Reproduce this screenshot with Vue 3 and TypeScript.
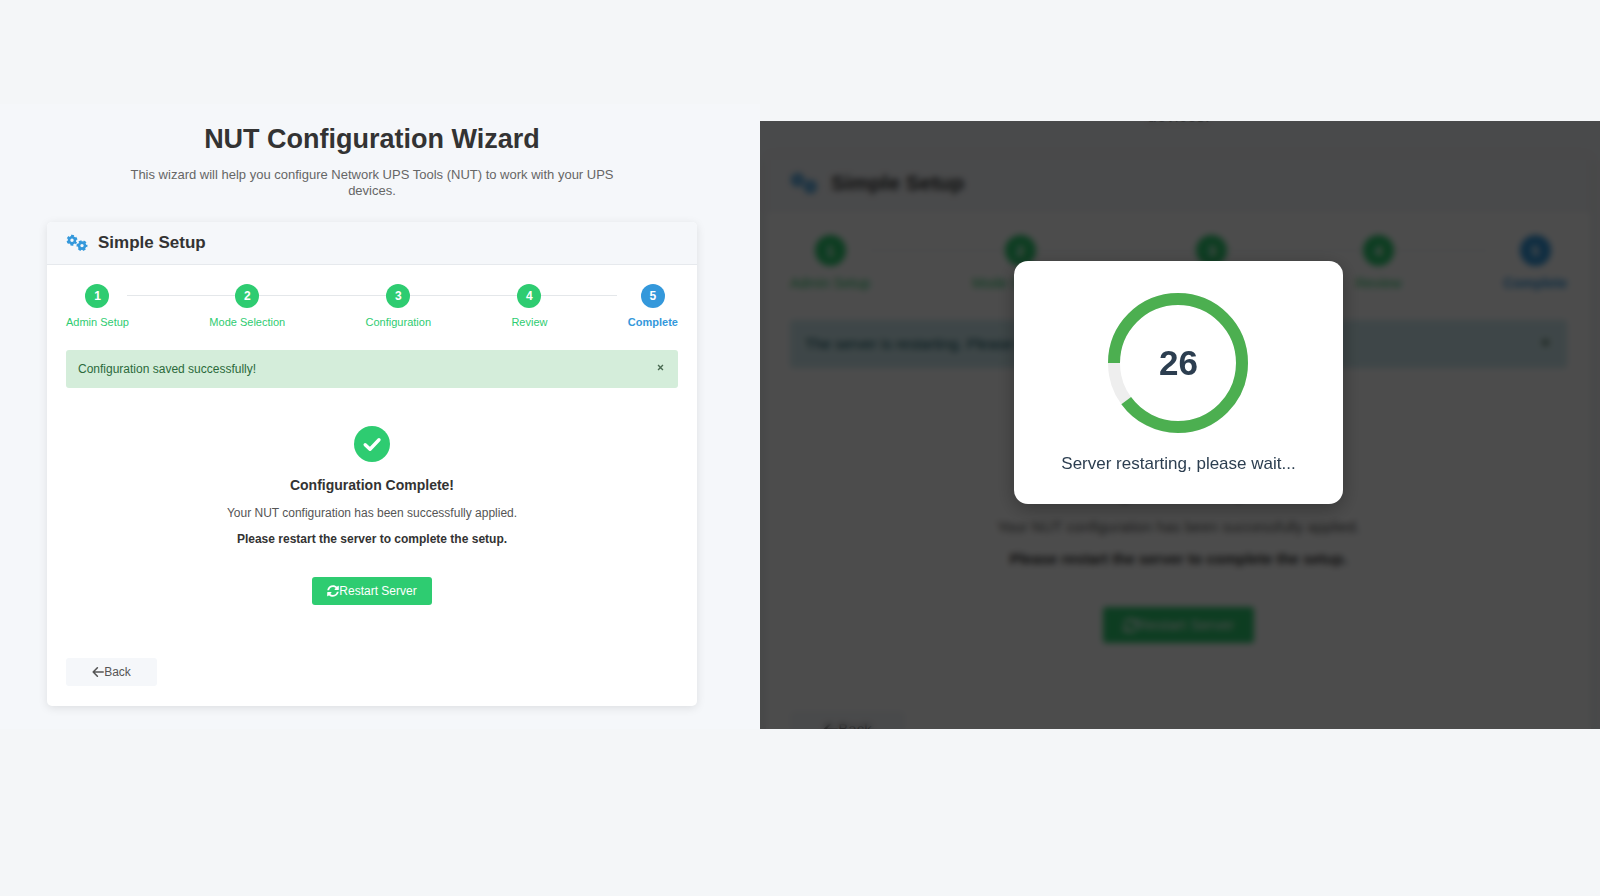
<script setup lang="ts">
import { ref } from 'vue'

interface Step {
  id: number
  label: string
}

interface Scene {
  name: string
  intro: string
  title?: string
  alert: string
  alertKind: 'success' | 'info'
  restarting: boolean
}

const steps: Step[] = [
  { id: 1, label: 'Admin Setup' },
  { id: 2, label: 'Mode Selection' },
  { id: 3, label: 'Configuration' },
  { id: 4, label: 'Review' },
  { id: 5, label: 'Complete' },
]
const currentStep = 5

const scenes: Scene[] = [
  {
    name: 'saved',
    title: 'NUT Configuration Wizard',
    intro:
      'This wizard will help you configure Network UPS Tools (NUT) to work with your UPS devices.',
    alert: 'Configuration saved successfully!',
    alertKind: 'success',
    restarting: false,
  },
  {
    name: 'restarting',
    intro: 'devices.',
    alert: 'The server is restarting. Please wait...',
    alertKind: 'info',
    restarting: true,
  },
]

const secondsLeft = ref(26)
const elapsedShare = 90
</script>

<template>
  <main class="page">
    <section v-for="scene in scenes" :key="scene.name" class="scene" :class="scene.name">
      <div class="wizard" :inert="scene.restarting">
        <h1 v-if="scene.title" class="title">{{ scene.title }}</h1>
        <p class="intro">{{ scene.intro }}</p>

        <article class="card">
          <header class="card-head">
            <svg class="gears" viewBox="0 0 22 18" fill="none" stroke="#3498db" aria-hidden="true">
              <circle cx="6" cy="6.2" r="3" stroke-width="2.6" />
              <circle cx="6" cy="6.2" r="4.5" stroke-width="1.9" stroke-dasharray="2.7 2.01" stroke-dashoffset="1.35" transform="rotate(30 6 6.2)" />
              <circle cx="16" cy="11.6" r="3" stroke-width="2.6" />
              <circle cx="16" cy="11.6" r="4.5" stroke-width="1.9" stroke-dasharray="2.7 2.01" stroke-dashoffset="1.35" />
            </svg>
            <h2>Simple Setup</h2>
          </header>

          <div class="card-body">
            <ol class="steps">
              <li v-for="step in steps" :key="step.id" :class="{ active: step.id === currentStep }">
                <span class="dot">{{ step.id }}</span>
                <span class="step-label">{{ step.label }}</span>
              </li>
            </ol>

            <div class="alert" :class="scene.alertKind" role="status">
              <span>{{ scene.alert }}</span>
              <button type="button" class="close" aria-label="Close">
                <svg viewBox="0 0 8 8" fill="none" stroke="currentColor" stroke-width="1.6" aria-hidden="true">
                  <path d="M1.2 1.2 6.8 6.8M6.8 1.2 1.2 6.8" />
                </svg>
              </button>
            </div>

            <div class="result">
              <div class="badge">
                <svg viewBox="0 0 36 36" fill="none" stroke="#fff" stroke-width="3.4" stroke-linecap="round" stroke-linejoin="round" aria-hidden="true">
                  <path d="M11.2 18.7 16 23.2 25 13.8" />
                </svg>
              </div>
              <h3>Configuration Complete!</h3>
              <p>Your NUT configuration has been successfully applied.</p>
              <p class="strong">Please restart the server to complete the setup.</p>
              <button type="button" class="btn restart">
                <svg viewBox="0 0 512 512" fill="currentColor" aria-hidden="true">
                  <path d="M370.72 133.28C339.458 104.008 298.888 87.962 255.848 88c-77.458.068-144.328 53.178-162.791 126.85-1.344 5.363-6.122 9.15-11.651 9.15H24.103c-7.498 0-13.194-6.807-11.807-14.176C33.933 94.924 134.813 8 256 8c66.448 0 126.791 26.136 171.315 68.685L463.03 40.97C478.149 25.851 504 36.559 504 57.941V192c0 13.255-10.745 24-24 24H345.941c-21.382 0-32.09-25.851-16.971-40.971l41.75-41.749zM32 296h134.059c21.382 0 32.09 25.851 16.971 40.971l-41.75 41.75c31.262 29.273 71.835 45.319 114.876 45.28 77.418-.07 144.315-53.144 162.787-126.849 1.344-5.363 6.122-9.15 11.651-9.15h57.304c7.498 0 13.194 6.807 11.807 14.176C478.067 417.076 377.187 504 256 504c-66.448 0-126.791-26.136-171.315-68.685L48.97 471.03C33.851 486.149 8 475.441 8 454.059V320c0-13.255 10.745-24 24-24z" />
                </svg>
                <span>Restart Server</span>
              </button>
            </div>

            <button type="button" class="btn back">
              <svg viewBox="0 0 12 12" fill="none" stroke="currentColor" stroke-width="1.6" stroke-linecap="round" stroke-linejoin="round" aria-hidden="true">
                <path d="M11.2 6H1.2M5.4 1.8 1.2 6l4.2 4.2" />
              </svg>
              <span>Back</span>
            </button>
          </div>
        </article>
      </div>

      <div v-if="scene.restarting" class="overlay">
        <div class="dialog" role="alertdialog" aria-labelledby="restart-message">
          <div class="countdown">
            <svg viewBox="0 0 140 140" fill="none" stroke-width="12" aria-hidden="true">
              <circle cx="70" cy="70" r="64" stroke="#eeeeee" />
              <circle cx="70" cy="70" r="64" stroke="#4caf50" pathLength="100" :stroke-dasharray="`${elapsedShare} 100`" transform="rotate(180 70 70)" />
            </svg>
            <span class="seconds">{{ secondsLeft }}</span>
          </div>
          <p id="restart-message">Server restarting, please wait...</p>
        </div>
      </div>
    </section>
  </main>
</template>

<style>
body {
  margin: 0;
  background: #f4f6f8;
}
</style>

<style scoped>
* {
  box-sizing: border-box;
}

h1,
h2,
h3,
p,
ol {
  margin: 0;
  padding: 0;
}

button {
  border: 0;
  font: inherit;
  cursor: pointer;
}

svg {
  display: block;
}

.page {
  display: grid;
  grid-template-columns: 760fr 840fr;
  padding-top: 104px;
  font-family: 'Liberation Sans', Arial, sans-serif;
  color: #333;
}

.scene {
  min-width: 0;
  background: #f5f7fa;
}

/* Sizes of the wizard at its normal zoom */
.saved {
  --text: 12px;
  --text-line: 16px;
  --head-size: 17px;
  --head-height: 43px;
  --gears: 22px;
  --gears-gap: 10px;
  --pad: 19px;
  --dot: 24px;
  --label: 11px;
  --label-line: 14px;
  --label-gap: 7px;
  --steps-gap: 21px;
  --alert-height: 38px;
  --alert-pad: 12px;
  --close: 7px;
  --badge: 36px;
  --badge-gap: 38px;
  --h3: 14px;
  --h3-line: 20px;
  --h3-gap: 13px;
  --p-gap: 10px;
  --btn-gap: 30px;
  --btn-height: 28px;
  --btn-pad: 15px;
  --back-gap: 53px;
  --back-width: 91px;
  padding: 19px 63px 23px 47px;
}

/* The same wizard zoomed in behind the restart dialog */
.restarting {
  --text: 15px;
  --text-line: 20px;
  --head-size: 21px;
  --head-height: 55px;
  --gears: 28px;
  --gears-gap: 13px;
  --pad: 24px;
  --dot: 31px;
  --label: 14px;
  --label-line: 18px;
  --label-gap: 8px;
  --steps-gap: 28px;
  --alert-height: 48px;
  --alert-pad: 15px;
  --close: 9px;
  --badge: 46px;
  --badge-gap: 48px;
  --h3: 18px;
  --h3-line: 26px;
  --h3-gap: 17px;
  --p-gap: 12px;
  --btn-gap: 38px;
  --btn-height: 36px;
  --btn-pad: 20px;
  --back-gap: 68px;
  --back-width: 115px;
  position: relative;
  margin-top: 17px;
  overflow: hidden;
}

.restarting .wizard {
  position: absolute;
  inset: 0;
  padding: 0 9px 0 6px;
}

.title {
  font-size: 27px;
  line-height: 32px;
  text-align: center;
}

.intro {
  max-width: 500px;
  margin: 12px auto 23px;
  font-size: 13px;
  line-height: 16px;
  text-align: center;
  color: #666;
}

.restarting .intro {
  margin: -14px auto 29px;
  font-size: 17px;
  line-height: 20px;
}

.card {
  border-radius: 5px;
  background: #fff;
  box-shadow: 0 2px 10px rgba(0, 0, 0, 0.1);
}

.card-head {
  display: flex;
  align-items: center;
  gap: var(--gears-gap);
  height: var(--head-height);
  padding: 0 var(--pad);
  border-bottom: 1px solid #e6e9ed;
  border-radius: 5px 5px 0 0;
  background: #f5f7fa;
}

.card-head h2 {
  font-size: var(--head-size);
  line-height: var(--h3-line);
}

.gears {
  width: var(--gears);
}

.card-body {
  padding: var(--pad) var(--pad) 20px;
}

.steps {
  position: relative;
  display: flex;
  justify-content: space-between;
  list-style: none;
}

.steps::before {
  content: '';
  position: absolute;
  top: calc(var(--dot) / 2 - 1px);
  left: 10%;
  right: 10%;
  height: 1px;
  background: #e4e7ea;
}

.steps li {
  position: relative;
  display: flex;
  flex-direction: column;
  align-items: center;
  gap: var(--label-gap);
  color: #2ecc71;
}

.dot {
  display: grid;
  place-items: center;
  width: var(--dot);
  height: var(--dot);
  border-radius: 50%;
  background: #2ecc71;
  color: #fff;
  font-size: var(--text);
  font-weight: bold;
}

.step-label {
  font-size: var(--label);
  line-height: var(--label-line);
}

.steps .active {
  color: #3498db;
  font-weight: bold;
}

.active .dot {
  background: #3498db;
}

.alert {
  display: flex;
  align-items: center;
  justify-content: space-between;
  height: var(--alert-height);
  margin-top: var(--steps-gap);
  padding: 0 var(--alert-pad);
  border-radius: 3px;
  font-size: var(--text);
  line-height: var(--text-line);
}

.success {
  background: #d4edda;
  color: #2b6a3a;
}

.info {
  background: #d1ecf1;
  color: #0c5460;
}

.close {
  padding: 0 2px 4px;
  background: none;
  color: #4a6a52;
}

.close svg {
  width: var(--close);
}

.result {
  display: flex;
  flex-direction: column;
  align-items: center;
  padding-top: var(--badge-gap);
  font-size: var(--text);
  line-height: var(--text-line);
  text-align: center;
}

.badge {
  width: var(--badge);
  height: var(--badge);
  border-radius: 50%;
  background: #2ecc71;
}

.result h3 {
  margin-top: var(--h3-gap);
  font-size: var(--h3);
  line-height: var(--h3-line);
}

.result p {
  margin-top: var(--p-gap);
  color: #555;
}

.result .strong {
  font-weight: bold;
  color: #333;
}

.btn {
  display: flex;
  align-items: center;
  justify-content: center;
  height: var(--btn-height);
  padding: 0 var(--btn-pad);
  border-radius: 3px;
  font-size: var(--text);
  line-height: var(--text-line);
}

.btn svg {
  width: var(--text);
}

.restart {
  margin-top: var(--btn-gap);
  background: #2ecc71;
  color: #fff;
}

.back {
  width: var(--back-width);
  margin-top: var(--back-gap);
  background: #f5f7fa;
  color: #555;
}

.overlay {
  position: absolute;
  inset: 0;
  display: flex;
  justify-content: center;
  align-items: flex-start;
  padding: 140px 3px 0 0;
  background: rgba(0, 0, 0, 0.7);
  backdrop-filter: blur(3px);
}

.dialog {
  display: flex;
  flex-direction: column;
  align-items: center;
  gap: 20px;
  padding: 32px 47px 29px;
  border-radius: 14px;
  background: #fff;
  box-shadow: 0 5px 20px rgba(0, 0, 0, 0.3);
  color: #2c3e50;
}

.dialog p {
  font-size: 17px;
  line-height: 22px;
}

.countdown {
  display: grid;
  place-items: center;
}

.countdown > * {
  grid-area: 1 / 1;
}

.countdown svg {
  width: 140px;
}

.seconds {
  font-size: 35px;
  font-weight: bold;
  line-height: 40px;
}
</style>
